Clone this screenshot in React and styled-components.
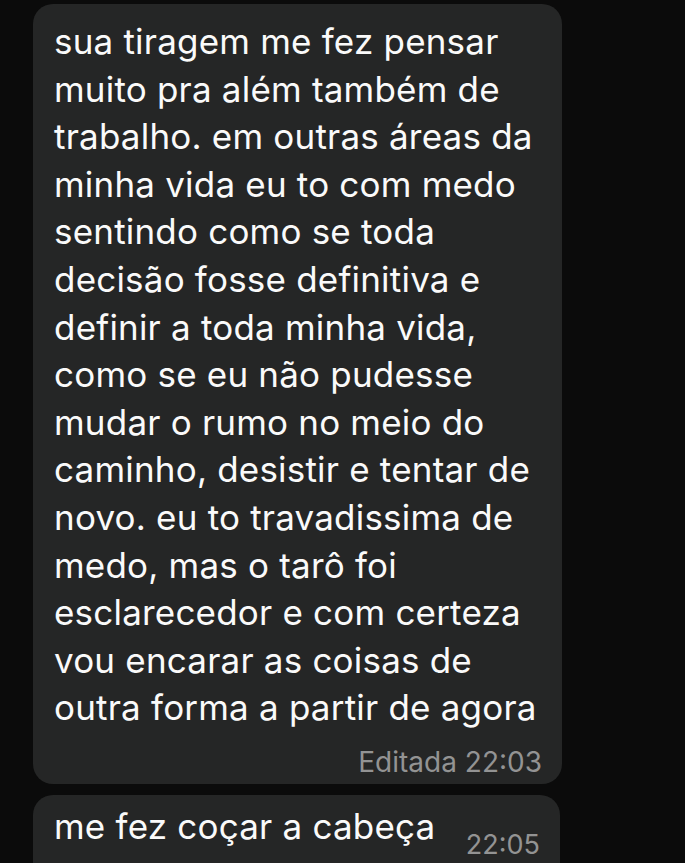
import styled, { createGlobalStyle } from "styled-components";

const GlobalStyle = createGlobalStyle`
  html, body {
    margin: 0;
    padding: 0;
    background: #0b0b0b;
    overflow: hidden;
  }
  body {
    font-family: Inter, "Noto Sans", sans-serif;
    -webkit-font-smoothing: antialiased;
  }
`;

const messages = [
  {
    id: 1,
    lines: [
      "sua tiragem me fez pensar",
      "muito pra além também de",
      "trabalho. em outras áreas da",
      "minha vida eu to com medo",
      "sentindo como se toda",
      "decisão fosse definitiva e",
      "definir a toda minha vida,",
      "como se eu não pudesse",
      "mudar o rumo no meio do",
      "caminho, desistir e tentar de",
      "novo. eu to travadissima de",
      "medo, mas o tarô foi",
      "esclarecedor e com certeza",
      "vou encarar as coisas de",
      "outra forma a partir de agora",
    ],
    time: "22:03",
    edited: true,
  },
  {
    id: 2,
    lines: ["me fez coçar a cabeça"],
    time: "22:05",
    edited: false,
  },
];

export default function App() {
  return (
    <>
      <GlobalStyle />
      <StyledChat>
        {messages.map((message) =>
          message.edited ? (
            <StyledBubble key={message.id}>
              <StyledText>
                {message.lines.map((line) => (
                  <StyledLine key={line}>{line}</StyledLine>
                ))}
              </StyledText>
              <StyledMeta>Editada {message.time}</StyledMeta>
            </StyledBubble>
          ) : (
            <StyledShortBubble key={message.id}>
              <StyledText>
                {message.lines.map((line) => (
                  <StyledLine key={line}>{line}</StyledLine>
                ))}
              </StyledText>
              <StyledInlineTime>{message.time}</StyledInlineTime>
            </StyledShortBubble>
          )
        )}
      </StyledChat>
    </>
  );
}

const StyledChat = styled.main`
  display: flex;
  flex-direction: column;
  gap: 11px;
  padding: 4px 0 0 33px;
  height: 863px;
  box-sizing: border-box;
`;

const StyledBubble = styled.section`
  width: 529px;
  box-sizing: border-box;
  background-color: #252626;
  border-radius: 20px;
  padding: 14px 20px 7px 21px;
  color: #fafafa;
`;

const StyledShortBubble = styled(StyledBubble)`
  display: flex;
  align-items: flex-start;
  justify-content: space-between;
  width: 527px;
  padding: 8px 20px 40px 21px;
`;

const StyledText = styled.p`
  margin: 0;
  font-size: 35px;
  line-height: 47.6px;
  letter-spacing: 0.2px;
`;

const StyledLine = styled.span`
  display: block;
  white-space: nowrap;
`;

const StyledMeta = styled.div`
  text-align: right;
  font-size: 28px;
  line-height: 30px;
  color: #939393;
  margin-top: 15px;
`;

const StyledInlineTime = styled.span`
  font-size: 27px;
  line-height: 30px;
  color: #939393;
  margin-top: 27px;
`;
